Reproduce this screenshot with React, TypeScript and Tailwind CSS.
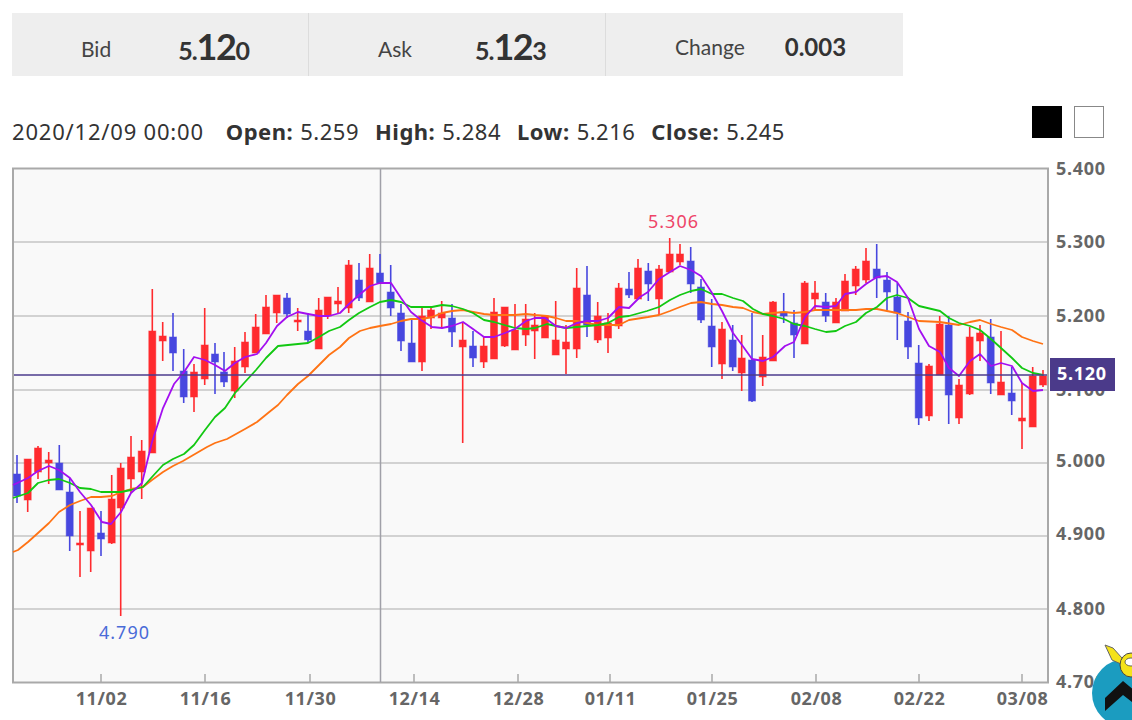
const RED = '#ff2a2e';
const BLUE = '#4747df';

// x, bodyTop, bodyBottom, wickTop, wickBottom, up
type Candle = [number, number, number, number, number, 0 | 1];

const candles: Candle[] = [
  [17, 474, 496, 455, 503, 0], [27.7, 459, 500, 459, 512, 1], [38, 448, 472, 446, 479, 1], [48.7, 460, 463, 452, 484, 1],
  [59.3, 463, 490, 445, 490, 0], [69.7, 492, 536, 478, 551, 0], [80, 543, 545, 511, 577, 1], [90.7, 508, 551, 508, 572, 1],
  [101, 533, 539, 511, 556, 0], [111.7, 499, 543, 475, 544, 1], [120.7, 468, 508, 463, 616, 1], [131, 457, 479, 436, 493, 1],
  [141.7, 451, 472, 440, 499, 1], [152.3, 331, 453, 289, 453, 1], [162.7, 336, 341, 322, 361, 1], [173, 337, 353, 313, 371, 0],
  [183.7, 371, 397, 349, 403, 0], [194, 372, 397, 364, 412, 1], [204.7, 345, 379, 308, 385, 1], [215, 354, 362, 343, 394, 0],
  [224, 372, 382, 352, 387, 0], [234.7, 361, 391, 347, 398, 1], [245, 342, 367, 332, 373, 1], [255.7, 327, 353, 314, 353, 1],
  [266, 307, 334, 295, 334, 1], [276.7, 295, 313, 295, 323, 1], [287, 298, 314, 293, 318, 0], [297.7, 320, 322, 308, 331, 1],
  [308, 331, 340, 313, 342, 0], [318.7, 310, 349, 298, 349, 1], [327.7, 297, 316, 297, 319, 1], [338, 301, 304, 287, 313, 1],
  [348.7, 265, 308, 260, 313, 1], [359, 280, 298, 263, 301, 0], [369.7, 268, 302, 254, 302, 1], [380, 273, 283, 254, 283, 0],
  [390.7, 292, 308, 265, 316, 0], [401, 313, 341, 304, 351, 0], [411.7, 343, 362, 318, 362, 0], [422, 316, 362, 308, 371, 1],
  [431, 310, 318, 308, 329, 1], [441.7, 313, 318, 301, 328, 1], [452, 318, 332, 304, 347, 0], [462.7, 340, 347, 323, 443, 1],
  [473, 346, 358, 331, 367, 0], [483.7, 346, 362, 337, 368, 1], [494, 312, 359, 298, 359, 1], [504.7, 307, 346, 307, 347, 1],
  [515, 330, 350, 304, 350, 1], [525.7, 319, 335, 304, 346, 1], [534.7, 325, 331, 313, 359, 1], [545, 316, 338, 316, 338, 1],
  [555.7, 340, 355, 301, 355, 1], [566, 342, 349, 325, 374, 1], [576.7, 288, 349, 268, 358, 1], [587, 295, 325, 266, 337, 0],
  [597.7, 316, 340, 302, 343, 1], [608, 323, 338, 313, 353, 1], [618.7, 288, 326, 283, 329, 1], [629, 289, 295, 272, 298, 0],
  [638, 268, 299, 259, 299, 1], [648.3, 271, 284, 263, 301, 0], [659, 269, 299, 265, 315, 1], [669.7, 254, 272, 238, 272, 1],
  [680, 254, 262, 244, 265, 1], [690.7, 261, 284, 247, 293, 0], [701, 287, 320, 279, 323, 0], [711.7, 326, 347, 299, 367, 0],
  [722, 329, 364, 322, 379, 1], [732.7, 340, 367, 325, 371, 0], [741.7, 358, 373, 335, 391, 1], [752, 360, 401, 313, 402, 0],
  [762.7, 357, 377, 335, 386, 1], [773, 302, 361, 301, 361, 1], [783.7, 312, 316, 293, 323, 0], [794, 323, 335, 310, 358, 0],
  [804.7, 283, 344, 281, 344, 1], [815, 293, 299, 281, 310, 1], [825.7, 302, 316, 293, 322, 0], [836, 302, 323, 298, 323, 1],
  [845, 281, 311, 274, 311, 1], [855.7, 269, 286, 266, 295, 1], [866, 261, 280, 248, 283, 1], [876.7, 269, 278, 244, 298, 0],
  [887, 280, 292, 272, 310, 0], [897.3, 297, 313, 283, 340, 0], [908, 321, 347, 312, 359, 0], [918.7, 363, 418, 345, 425, 0],
  [929, 366, 416, 364, 421, 1], [939.7, 324, 375, 316, 375, 1], [948.7, 325, 395, 316, 424, 0], [959, 385, 418, 379, 424, 1],
  [969.7, 337, 394, 327, 395, 1], [980, 333, 341, 325, 361, 1], [990.7, 337, 383, 319, 394, 0], [1001, 382, 395, 331, 395, 1],
  [1011.7, 393, 401, 367, 415, 0], [1022, 418, 421, 383, 449, 1], [1032.7, 376, 427, 367, 427, 1], [1043, 376, 385, 370, 387, 1],
];

const purple =
  '13,485 28,478 38,471 49,466 59,470 70,478 80,492 91,505 102,522 111,524 121,512 131,493 142,483 152,442 163,408 174,384 184,372 194,357 205,360 215,365 225,371 235,363 245,357 257,354 266,343 277,326 287,317 298,312 308,314 319,316 329,316 340,313 349,304 359,295 370,286 380,283 391,283 401,298 411,312 421,320 432,327 442,328 452,326 463,322 473,329 484,337 494,337 505,333 515,329 526,321 535,318 545,318 556,326 566,328 577,323 587,321 598,321 608,318 619,307 629,308 640,297 648,292 659,279 670,272 680,266 691,270 701,276 712,293 722,311 733,333 742,345 752,359 763,361 773,357 785,346 794,342 805,317 815,306 826,307 836,306 845,294 856,292 866,284 877,277 887,276 897,282 908,298 919,329 929,346 940,352 949,368 959,376 970,361 980,354 991,366 1001,363 1012,366 1022,383 1033,391 1043,390';
const green =
  '13,498 28,493 38,483 49,480 59,479 70,483 80,488 91,489 101,492 121,492 131,490 143,487 152,477 163,465 173,459 184,454 194,445 205,430 215,417 225,408 235,393 245,382 256,370 266,358 278,346 308,343 319,337 329,331 340,327 349,320 359,313 370,307 380,302 391,300 401,302 411,307 422,307 432,307 442,305 452,306 463,309 473,313 484,320 494,322 515,328 526,329 535,328 547,324 556,326 566,328 577,327 598,325 608,323 619,317 629,316 647,311 659,307 670,300 680,295 691,291 701,289 712,294 722,294 733,298 743,301 753,309 763,314 773,316 784,319 794,324 805,326 815,329 826,332 836,331 845,326 856,322 866,313 877,307 887,298 897,295 908,298 919,306 940,311 949,318 959,323 970,326 980,330 991,339 1001,348 1012,358 1022,368 1033,373 1043,375';
const orange =
  '13,552 18,550 28,542 38,533 49,523 59,512 70,505 80,501 91,497 101,497 112,496 121,492 131,489 143,487 152,480 163,472 173,466 183,461 195,454 207,447 215,443 227,439 245,429 257,422 268,413 278,405 287,395 298,384 308,376 319,365 329,355 340,347 349,338 360,331 370,328 380,326 391,324 401,321 411,319 422,319 432,317 442,313 452,311 463,310 473,312 484,314 494,315 515,315 526,314 535,315 547,316 556,318 566,321 577,321 587,323 598,325 619,325 629,320 648,317 659,315 670,311 680,307 691,303 701,302 712,304 722,305 733,307 743,308 753,312 763,314 773,313 784,312 794,313 805,312 815,310 836,310 856,310 866,309 877,309 887,311 897,313 908,317 919,321 940,322 959,325 970,322 980,320 991,324 1001,327 1012,330 1022,337 1033,341 1043,344';

// grid y, label baseline, label
const priceLevels: [number, number, string][] = [
  [242, 248, '5.300'], [316, 322, '5.200'], [390, 396, '5.100'], [463, 467, '5.000'], [536, 540, '4.900'], [609, 615, '4.800'],
];
const dates: [number, string][] = [
  [101, '11/02'], [205, '11/16'], [310, '11/30'], [414, '12/14'], [518, '12/28'], [610, '01/11'],
  [712, '01/25'], [816, '02/08'], [919, '02/22'], [1022, '03/08'],
];

function Price({ last }: { last: string }) {
  return (
    <span className="font-bold leading-none text-[#333]">
      <span className="text-[25px] tracking-[-1px]">5.</span>
      <span className="text-[36px] tracking-[-1.5px]">12</span>
      <span className="text-[25px]">{last}</span>
    </span>
  );
}

function Chart() {
  return (
    <svg width="1132" height="560" viewBox="0 160 1132 560" className="block font-['Noto_Sans',sans-serif]">
      <rect x="13" y="168.5" width="1035" height="514" fill="#f9f9f9" stroke="#a9a9a9" strokeWidth="2" />
      {priceLevels.map(([y]) => (
        <line key={y} x1="14" x2="1047" y1={y} y2={y} stroke="#d2d2d2" strokeWidth="2" />
      ))}
      {dates.map(([x]) => (
        <line key={x} x1={x} x2={x} y1="674" y2="682" stroke="#a9a9a9" strokeWidth="1.5" />
      ))}
      <line x1="380.5" x2="380.5" y1="169" y2="682" stroke="#a0a0a8" strokeWidth="1.5" />
      {candles.map(([x, top, bottom, wTop, wBottom, up]) => {
        const color = up ? RED : BLUE;
        return (
          <g key={x}>
            <line x1={x} x2={x} y1={wTop} y2={wBottom} stroke={color} strokeWidth="1.6" />
            <rect x={x - 3.5} y={top} width="7" height={bottom - top} fill={color} stroke={color} strokeOpacity="0.5" strokeWidth="1" />
          </g>
        );
      })}
      <polyline points={orange} fill="none" stroke="#ff7314" strokeWidth="1.8" strokeLinejoin="round" />
      <polyline points={green} fill="none" stroke="#12c812" strokeWidth="1.8" strokeLinejoin="round" />
      <polyline points={purple} fill="none" stroke="#a30ff0" strokeWidth="1.8" strokeLinejoin="round" />
      <line x1="14" x2="1047" y1="375" y2="375" stroke="#4b3b8c" strokeWidth="1.5" />
      <text x="648" y="228" fontSize="18" letterSpacing="1" fill="#ee4468">5.306</text>
      <text x="99" y="639" fontSize="18" letterSpacing="1" fill="#4a6bd8">4.790</text>
      <g fontSize="18" fontWeight="700" letterSpacing="0.7" fill="#666">
        <text x="1056" y="175">5.400</text>
        {priceLevels.map(([y, labelY, t]) => (
          <text key={y} x="1056" y={labelY}>{t}</text>
        ))}
        <text x="1056" y="688">4.700</text>
      </g>
      <g fontSize="18" fontWeight="700" letterSpacing="0.6" fill="#666" textAnchor="middle">
        {dates.map(([x, t]) => (
          <text key={t} x={x + 0.5} y="705">{t}</text>
        ))}
      </g>
      <rect x="1050" y="358" width="65" height="33" fill="#4b3a8a" />
      <text x="1057" y="380" fontSize="18" fontWeight="700" letterSpacing="0.7" fill="#fff">5.120</text>
    </svg>
  );
}

function Mascot() {
  return (
    <svg width="42" height="85" viewBox="1090 635 42 85" className="absolute right-0 bottom-0">
      <circle cx="1126" cy="693" r="34" fill="#1b9cc0" />
      <polygon points="1105,698 1123,681 1140,695 1140,708 1123,695 1105,711" fill="#111" />
      <path d="M1105 645 L1113 648 L1122 658 L1121 664 L1112 660 Z" fill="#f4e21a" stroke="#666" strokeWidth="1" />
      <ellipse cx="1131" cy="665" rx="11" ry="12" fill="#f4e21a" stroke="#444" strokeWidth="1" />
      <ellipse cx="1131" cy="662" rx="6" ry="4" fill="#fff" stroke="#444" strokeWidth="0.8" />
    </svg>
  );
}

export default function App() {
  return (
    <div className="relative h-[720px] w-[1132px] overflow-hidden bg-white font-['Lato',sans-serif] text-[#333]">
      <div className="ml-3 mt-[13px] grid h-[63px] w-[891px] grid-cols-3 bg-[#eeeeee]">
        <div className="flex items-center border-r border-[#dcdcdc] pt-1">
          <span className="ml-[69px] mt-1 text-[21px] text-[#444]">Bid</span>
          <span className="ml-[67px]"><Price last="0" /></span>
        </div>
        <div className="flex items-center border-r border-[#dcdcdc] pt-1">
          <span className="ml-[69px] mt-1 text-[21px] text-[#444]">Ask</span>
          <span className="ml-[63px]"><Price last="3" /></span>
        </div>
        <div className="flex items-center pt-1">
          <span className="ml-[69px] text-[21px] text-[#444]">Change</span>
          <span className="ml-10 text-2xl font-bold">0.003</span>
        </div>
      </div>
      <div className="ml-3 mr-7 mt-[30px] flex h-[54px] items-start justify-between">
        <div className="mt-[11px] flex items-center font-['Noto_Sans',sans-serif] text-[22px] leading-7 tracking-[0.5px] text-[#333]">
          <span className="mr-[22px] tracking-[0.8px]">2020/12/09 00:00</span>
          <b className="mr-[7px]">Open:</b><span className="mr-4">5.259</span>
          <b className="mr-[7px]">High:</b><span className="mr-4">5.284</span>
          <b className="mr-[7px]">Low:</b><span className="mr-4">5.216</span>
          <b className="mr-[7px]">Close:</b><span>5.245</span>
        </div>
        <div className="flex gap-3">
          <div className="h-8 w-[30px] bg-black" />
          <div className="h-8 w-[30px] border border-[#888] bg-white" />
        </div>
      </div>
      <Chart />
      <Mascot />
    </div>
  );
}
